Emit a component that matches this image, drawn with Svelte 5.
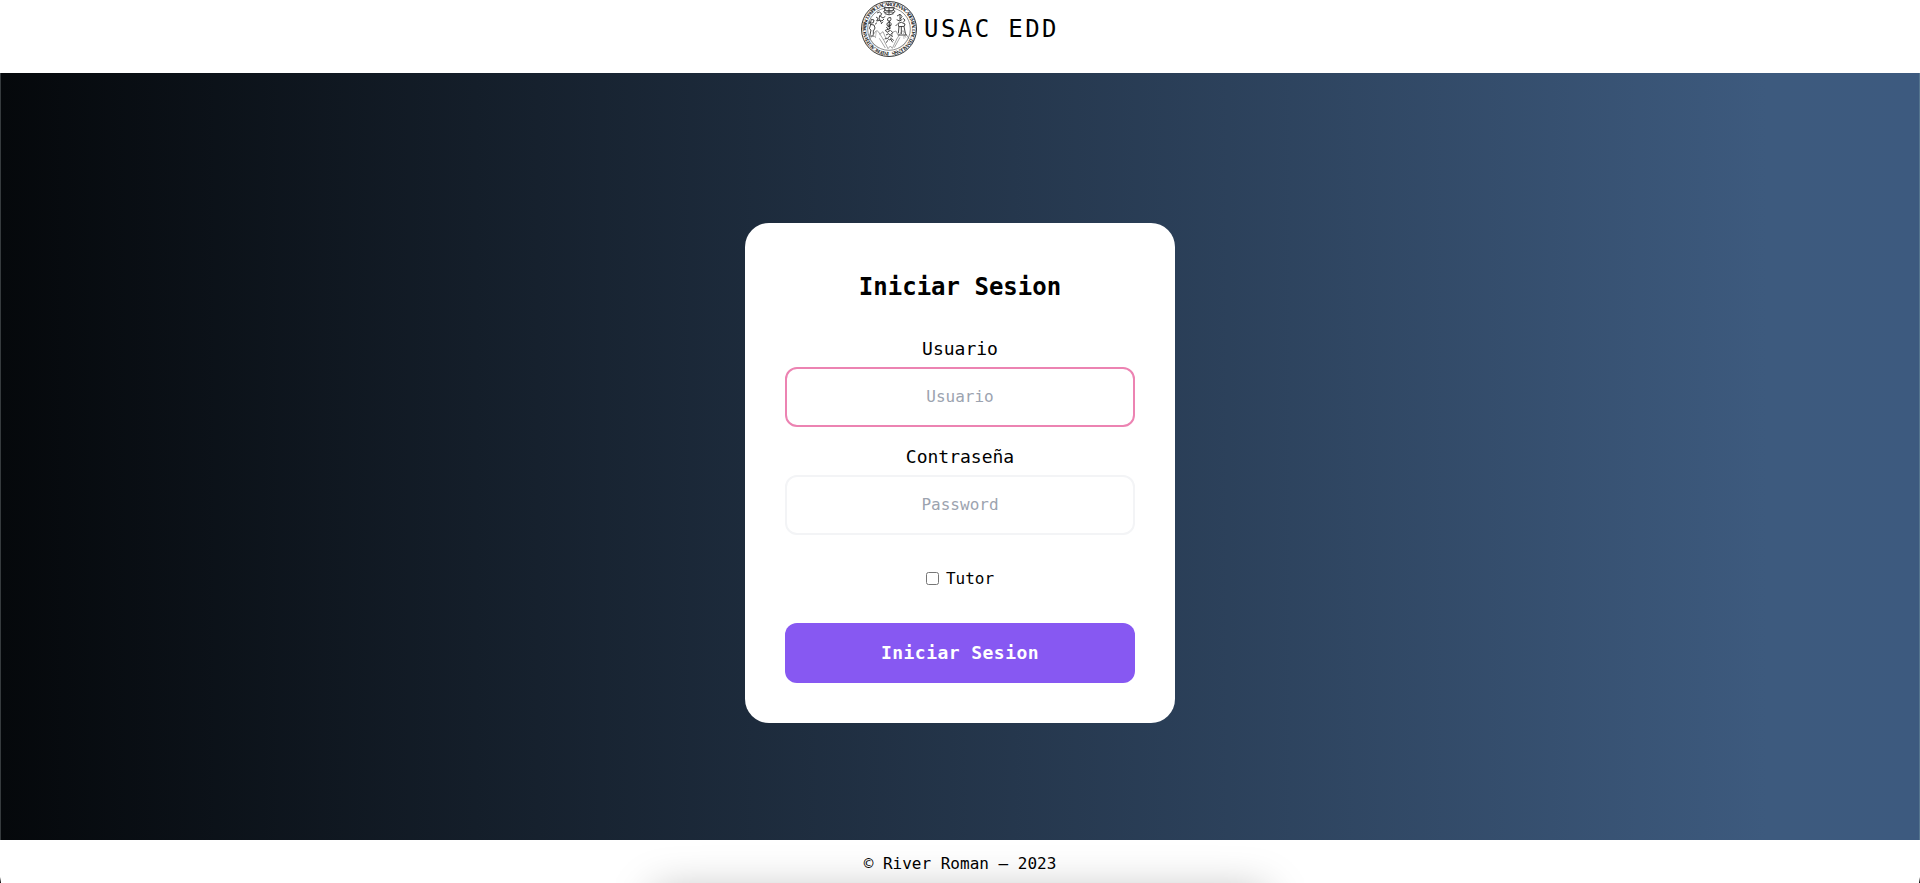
<script>
  let user = $state('');
  let password = $state('');
  let tutor = $state(false);
</script>

<div class="page">
  <header>
    <svg class="seal" viewBox="60 0 174 174" fill="none" stroke="#222" aria-hidden="true">
      <defs>
        <path id="ring" d="M147 156A69 69 0 1 1 148 156" />
      </defs>
      <circle cx="147" cy="87" r="82.5" stroke-width="2.8" />
      <circle cx="147" cy="87" r="64" stroke-width="2" stroke="#555" />
      <text class="motto"><textPath href="#ring" textLength="425">INTER CAETERAS ORBIS CONSPICUA CAROLINA ACADEMIA COACTEMALENSIS</textPath></text>
      <g stroke-width="2.5" stroke-linejoin="round">
        <path d="M132 23h31l-4 9h-23zM139 36h18M134 41q13 7 27 0M147 23v20M136 28l-5 8 8 3M159 28l6 7-9 5" />
        <path d="M111 39l7-3 7 5-4 8 8 5 7-5M108 51l6 4-4 8 9-2 5 7M119 46l-2 13 9 4 6-6M129 65l-6 7" />
        <path d="M147 53q7-3 6 5t-9 5q-5-8 3-10zM142 69q8-6 12 2 0 10-10 9-6-7-2-11zM148 63v25M139 81l6 7 8-5M143 75l9 1" />
        <path d="M171 48l9-5 6 6-5 8M170 59l9 4 8-5M180 42v21M189 55l6 5-5 7M174 70l10-3 11 5-2 7-17 1zM177 80l-2 20M184 80v22M192 80l5 24M174 105h27M171 73l-4 5" />
        <path d="M94 58l8 2-2 8-9 2zM90 73l12 2 3 9-4 8M92 74l-4 12 5 4-3 15M100 91v13M87 108h15M105 73l6-5M88 64v8" />
        <path d="M136 91l8-3 5 5-8 4zM151 91l7 6-6 7 7 6M138 105l8-4 5 6-7 6M134 117l8-3 6 6 8-4 5 6M143 121l-4 7M153 119l5 8" />
      </g>
      <g stroke="#666" stroke-width="1.8">
        <path d="M86 121l22-28q4-2 7 2l16 25M169 119l16-25q4-3 8 1l16 24M119 103l10-8 10 23M151 117l8-21 9-3 7 14M130 118l14 28 7-8 6 7 13-27M118 115l18 29M180 112l-17 31M102 107l5 6M192 105l6 8" />
        <path d="M91 118l9 15 17 12M203 119l-10 15-17 11M109 95l-3 18M190 97l2 20" stroke="#999" />
      </g>
    </svg>
    <span class="brand">USAC EDD</span>
  </header>

  <main>
    <form class="card" onsubmit={(e) => e.preventDefault()}>
      <h1>Iniciar Sesion</h1>
      <label class="field">
        <span>Usuario</span>
        <input class="control active" type="text" placeholder="Usuario" bind:value={user} />
      </label>
      <label class="field second">
        <span>Contraseña</span>
        <input class="control" type="password" placeholder="Password" bind:value={password} />
      </label>
      <label class="tutor">
        <input type="checkbox" bind:checked={tutor} />
        <span>Tutor</span>
      </label>
      <button type="submit">Iniciar Sesion</button>
    </form>
  </main>

  <footer>
    <p>© River Roman – 2023</p>
  </footer>
</div>

<style>
  :global(body) {
    margin: 0;
    background: #fff;
  }
  .page, .page * {
    box-sizing: border-box;
  }
  .page {
    position: relative;
    display: flex;
    flex-direction: column;
    height: 883px;
    overflow: hidden;
    color: #000;
    font-family: "DejaVu Sans Mono", monospace;
  }
  .page::before, .page::after {
    content: "";
    position: absolute;
    bottom: 0;
    left: 0;
    width: 1px;
    height: 6px;
    background: linear-gradient(transparent, #000);
  }
  .page::after {
    left: auto;
    right: 0;
  }
  header {
    height: 73px;
    display: flex;
    justify-content: center;
    align-items: flex-start;
    gap: 6px;
    padding-right: 1px;
  }
  .seal {
    width: 58px;
    height: 58px;
  }
  .motto {
    font: bold 16px "Liberation Serif", serif;
    fill: #222;
    stroke: none;
  }
  .brand {
    font-size: 24px;
    line-height: 32px;
    letter-spacing: 2.4px;
    padding-top: 13px;
  }
  main {
    height: 767px;
    display: flex;
    justify-content: center;
    align-items: flex-start;
    padding-top: 150px;
    border-left: 1px solid #363b3e;
    border-right: 1px solid #55758f;
    background: linear-gradient(90deg, #05080b 0%, #3d5a7e 92%, #3d5a7f 100%);
  }
  .card {
    width: 430px;
    height: 500px;
    padding: 40px;
    border-radius: 24px;
    background: #fff;
    display: flex;
    flex-direction: column;
  }
  h1 {
    margin: 8px 0 0;
    font-size: 24px;
    line-height: 32px;
    text-align: center;
  }
  .field {
    display: flex;
    flex-direction: column;
    margin-top: 32px;
    text-align: center;
    font-size: 18px;
    line-height: 28px;
  }
  .field.second {
    margin-top: 16px;
  }
  .field span {
    height: 32px;
  }
  .control {
    width: 100%;
    height: 60px;
    margin: 0;
    border: 2px solid #f3f4f6;
    border-radius: 12px;
    padding: 0 16px 2px;
    background: transparent;
    outline: none;
    text-align: center;
    font: 16px/24px "DejaVu Sans Mono", monospace;
  }
  .control.active {
    border-color: #ec83b2;
  }
  .control::placeholder {
    color: #9ca3af;
    opacity: 1;
  }
  .tutor {
    display: flex;
    justify-content: center;
    align-items: flex-start;
    gap: 7px;
    height: 24px;
    margin-top: 32px;
    font-size: 16px;
    line-height: 24px;
  }
  .tutor input {
    appearance: none;
    width: 13px;
    height: 13px;
    margin: 5px 0 0;
    border: 1px solid #767676;
    border-radius: 2.5px;
    background: #fff;
  }
  .tutor input:checked {
    background: #8758f2;
  }
  button {
    height: 60px;
    margin-top: 32px;
    border: 0;
    border-radius: 12px;
    background: #8758f2;
    color: #fff;
    font: bold 18px/28px "DejaVu Sans Mono", monospace;
    letter-spacing: 0.45px;
  }
  footer {
    height: 43px;
    display: flex;
    flex-direction: column;
    align-items: center;
    overflow: hidden;
  }
  p {
    margin: 0;
    padding-top: 12px;
    height: 43px;
    flex: none;
    font-size: 16px;
    line-height: 24px;
  }
  footer::after {
    content: "";
    flex: none;
    width: 612px;
    height: 60px;
    margin-top: 8px;
    box-shadow: 0 0 44px rgba(0, 0, 0, 0.27);
  }
</style>
